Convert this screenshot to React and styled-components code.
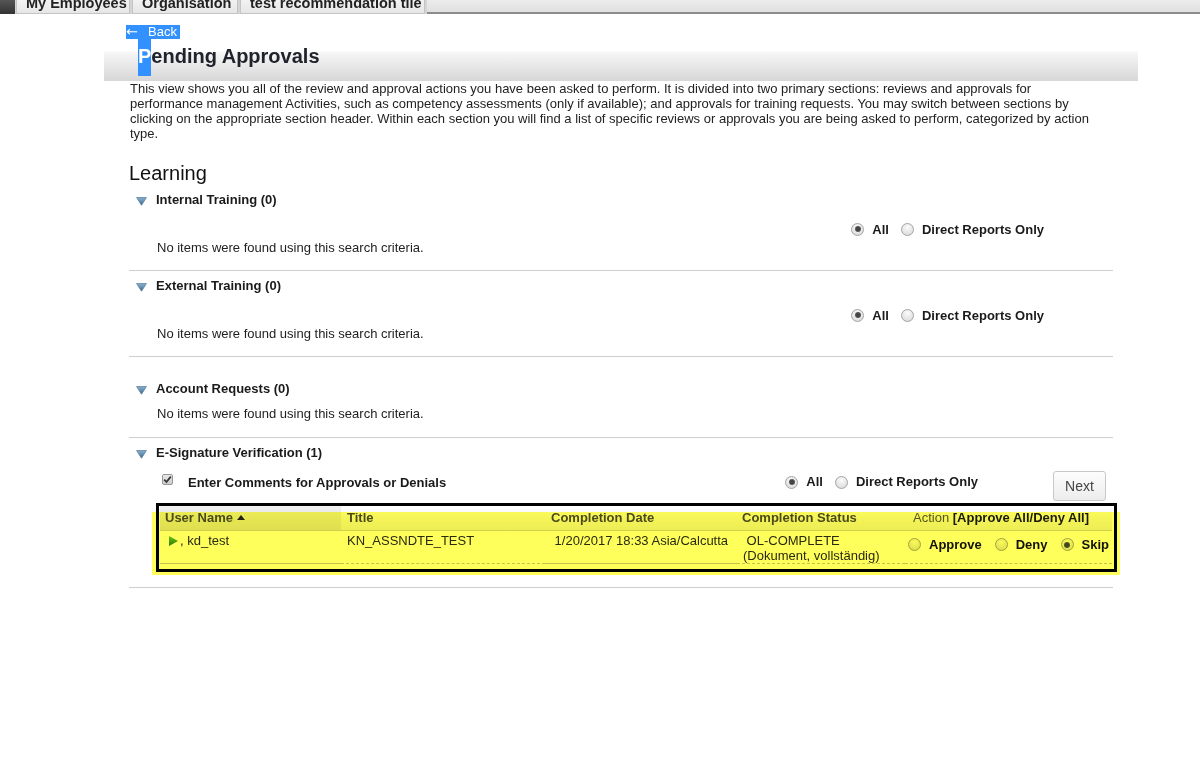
import styled, { createGlobalStyle } from "styled-components";

const GlobalStyle = createGlobalStyle`
  html, body {
    margin: 0;
    padding: 0;
    background: #fff;
  }
  body {
    font-family: "Liberation Sans", Arial, sans-serif;
    font-size: 13px;
    color: #222;
  }
`;

const sections = [
    { title: "Internal Training (0)", filter: true, padTop: 7 },
    { title: "External Training (0)", filter: true, padTop: 7 },
    { title: "Account Requests (0)", filter: false, padTop: 24, gap: 9 },
];

const columns = [
    { label: "User Name", pad: 5, sorted: true },
    { label: "Title", pad: 6 },
    { label: "Completion Date", pad: 6 },
    { label: "Completion Status", pad: 5 },
];

function Caret() {
    return (
        <CaretIcon width="11" height="9" viewBox="0 0 11 9">
            <defs>
                <linearGradient id="caretFill" x1="0" y1="0" x2="0" y2="1">
                    <stop offset="0" stopColor="#8cb2d0" />
                    <stop offset="1" stopColor="#3d6688" />
                </linearGradient>
            </defs>
            <polygon points="0.6,0.6 10.4,0.6 5.5,8.2" fill="url(#caretFill)" stroke="#56809f" strokeWidth="0.8" strokeLinejoin="round" />
        </CaretIcon>
    );
}

function Radio({ label, checked }) {
    return (
        <RadioOption>
            <RadioDot $checked={checked} />
            {label && <span>{label}</span>}
        </RadioOption>
    );
}

function Filter() {
    return (
        <RadioGroup>
            <Radio label="All" checked />
            <Radio label="Direct Reports Only" />
        </RadioGroup>
    );
}

export default function App() {
    return (
        <>
            <GlobalStyle />
            <TopBar>
                <AppBlock />
                <Tab $w={114}><TabLabel>My Employees</TabLabel></Tab>
                <Tab $w={106}><TabLabel>Organisation</TabLabel></Tab>
                <Tab $w={185}><TabLabel>test recommendation tile</TabLabel></Tab>
                <TopFill />
            </TopBar>

            <Main>
                <BackLink><Arrow>←</Arrow>Back</BackLink>
                <Banner>
                    <Heading><Selected>P</Selected>ending Approvals</Heading>
                </Banner>

                <Content>
                    <Intro>
                        This view shows you all of the review and approval actions you have been asked to perform. It is divided into two primary sections: reviews and approvals for performance management Activities, such as competency assessments (only if available); and approvals for training requests. You may switch between sections by clicking on the appropriate section header. Within each section you will find a list of specific reviews or approvals you are being asked to perform, categorized by action type.
                    </Intro>

                    <GroupTitle>Learning</GroupTitle>

                    {sections.map((s) => (
                        <Section key={s.title} $padTop={s.padTop} $padBottom={s.filter ? 15 : 16}>
                            <SectionHeader><Caret />{s.title}</SectionHeader>
                            {s.filter && (
                                <FilterRow><Filter /></FilterRow>
                            )}
                            <NoItems $gap={s.gap || 1}>No items were found using this search criteria.</NoItems>
                        </Section>
                    ))}

                    <Section $padTop={7} $padBottom={23}>
                        <SectionHeader><Caret />E-Signature Verification (1)</SectionHeader>
                        <ControlRow>
                            <CheckBox>
                                <svg width="9" height="9" viewBox="0 0 9 9">
                                    <path d="M1.2 4.6 L3.5 7 L7.8 1.6" fill="none" stroke="#333" strokeWidth="1.8" />
                                </svg>
                            </CheckBox>
                            <CommentLabel>Enter Comments for Approvals or Denials</CommentLabel>
                            <ControlRadios><Filter /></ControlRadios>
                            <NextButton type="button">Next</NextButton>
                        </ControlRow>

                        <TableArea>
                            <Table>
                                {columns.map((c) => (
                                    <HeadCell key={c.label} $pad={c.pad} $sorted={c.sorted}>
                                        {c.label}
                                        {c.sorted && (
                                            <SortIcon width="8" height="5" viewBox="0 0 8 5">
                                                <polygon points="0,5 4,0 8,5" fill="#222" />
                                            </SortIcon>
                                        )}
                                    </HeadCell>
                                ))}
                                <HeadCell $pad={8}>
                                    <span>
                                        <Plain>Action </Plain>
                                        <strong>[Approve All/Deny All]</strong>
                                    </span>
                                </HeadCell>

                                <DataCell $pad={9} $line="solid">
                                    <PlayIcon width="9" height="10" viewBox="0 0 9 10">
                                        <defs>
                                            <linearGradient id="playFill" x1="0" y1="0" x2="0" y2="1">
                                                <stop offset="0" stopColor="#6cc23c" />
                                                <stop offset="1" stopColor="#2c7a12" />
                                            </linearGradient>
                                        </defs>
                                        <polygon points="0,0 9,5 0,10" fill="url(#playFill)" />
                                    </PlayIcon>
                                    , kd_test
                                </DataCell>
                                <DataCell $pad={6} $line="dashed">KN_ASSNDTE_TEST</DataCell>
                                <DataCell $pad={6} $line="solid">&nbsp;1/20/2017 18:33 Asia/Calcutta</DataCell>
                                <DataCell $pad={6} $line="dashed">
                                    &nbsp;OL-COMPLETE<br />(Dokument, vollständig)
                                </DataCell>
                                <DataCell $pad={3} $line="dashed" $top={6}>
                                    <ActionGroup>
                                        <Radio label="Approve" />
                                        <Radio label="Deny" />
                                        <Radio label="Skip" checked />
                                    </ActionGroup>
                                </DataCell>
                            </Table>
                            <Highlight />
                            <Frame />
                        </TableArea>
                    </Section>
                </Content>
            </Main>
        </>
    );
}

const TopBar = styled.div`
    display: flex;
    height: 14px;
    overflow: hidden;
    background: #d4d4d4;
`;
const AppBlock = styled.div`
    width: 15px;
    margin-right: 1px;
    background: linear-gradient(#555, #333);
`;
const Tab = styled.div`
    box-sizing: border-box;
    width: ${(p) => p.$w}px;
    margin-right: 2px;
    padding-left: 9px;
    border: 1px solid #c4c4c4;
    border-top: none;
    background: linear-gradient(#f2f2f2, #e6e6e6);
    overflow: hidden;
`;
const TabLabel = styled.span`
    display: block;
    margin-top: -4px;
    font-size: 14.5px;
    font-weight: bold;
    line-height: 14px;
    color: #222;
    white-space: nowrap;
`;
const TopFill = styled.div`
    flex: 1;
    box-sizing: border-box;
    border-bottom: 2px solid #8c8c8c;
    background: linear-gradient(#ececec, #e0e0e0);
`;

const Main = styled.div`
    width: 1034px;
    margin-left: 104px;
`;
const BackLink = styled.a`
    display: inline-block;
    margin: 11px 0 0 22px;
    padding-right: 3px;
    background: #3390ff;
    color: #fff;
    font-size: 13px;
    line-height: 14px;
    vertical-align: top;
`;
const Arrow = styled.span`
    display: inline-block;
    width: 11px;
    margin-right: 11px;
    font-family: "DejaVu Sans", sans-serif;
    font-size: 13px;
    line-height: 14px;
    transform: scaleX(1.1);
    transform-origin: left center;
`;
const Banner = styled.div`
    height: 44px;
    margin-top: -2px;
    padding-left: 34px;
    background: linear-gradient(#fff 0, #fff 14px, #f7f7f7 15px, #d7d7d7 100%);
`;
const Heading = styled.h1`
    margin: 0;
    font-size: 20px;
    font-weight: bold;
    line-height: 39px;
    color: #20222c;
`;
const Selected = styled.span`
    display: inline-block;
    background: #3390ff;
    color: #fff;
    line-height: 39px;
`;

const Content = styled.div`
    width: 984px;
    margin-left: 25px;
`;
const Intro = styled.p`
    width: 965px;
    margin: 0 0 0 1px;
    font-size: 13px;
    line-height: 15px;
    color: #222;
`;
const GroupTitle = styled.h2`
    margin: 20px 0 0;
    font-size: 20px;
    font-weight: normal;
    line-height: 24px;
    color: #111;
`;

const Section = styled.section`
    padding: ${(p) => p.$padTop}px 0 ${(p) => p.$padBottom}px;
    border-bottom: 1px solid #cfcfcf;
`;
const SectionHeader = styled.div`
    display: flex;
    align-items: center;
    gap: 9px;
    padding-left: 7px;
    font-size: 13px;
    font-weight: bold;
    line-height: 16px;
    color: #1a1a1a;
`;
const CaretIcon = styled.svg`
    display: block;
    margin-top: 2px;
`;
const FilterRow = styled.div`
    display: flex;
    justify-content: flex-end;
    align-items: center;
    height: 20px;
    margin-top: 11px;
    padding-right: 69px;
`;
const RadioGroup = styled.div`
    display: flex;
    align-items: center;
    gap: 12px;
    font-size: 13px;
    font-weight: bold;
    color: #1a1a1a;
`;
const RadioOption = styled.label`
    display: inline-flex;
    align-items: center;
    gap: 8px;
`;
const RadioDot = styled.span`
    position: relative;
    box-sizing: border-box;
    width: 13px;
    height: 13px;
    border: 1px solid #a3a3a3;
    border-radius: 50%;
    background: radial-gradient(circle at 50% 30%, #fbfbfb, #d6d6d6);

    &::after {
        content: "";
        display: ${(p) => (p.$checked ? "block" : "none")};
        position: absolute;
        left: 2.5px;
        top: 2.5px;
        width: 6px;
        height: 6px;
        border-radius: 50%;
        background: radial-gradient(circle, #444 40%, #777 100%);
    }
`;
const NoItems = styled.div`
    margin-top: ${(p) => p.$gap}px;
    padding-left: 28px;
    font-size: 13px;
    line-height: 15px;
    color: #222;
`;

const ControlRow = styled.div`
    display: flex;
    align-items: flex-start;
    height: 30px;
    margin-top: 10px;
    padding-right: 7px;
`;
const CheckBox = styled.span`
    display: flex;
    align-items: center;
    justify-content: center;
    box-sizing: border-box;
    width: 11px;
    height: 11px;
    margin: 3px 0 0 33px;
    border: 1px solid #979797;
    border-radius: 2px;
    background: linear-gradient(#e8e8e8, #cdcdcd);
`;
const CommentLabel = styled.span`
    margin: 4px 0 0 15px;
    font-size: 13px;
    font-weight: bold;
    line-height: 16px;
    color: #1a1a1a;
`;
const ControlRadios = styled.div`
    margin: 3px 75px 0 auto;
    line-height: 16px;
`;
const NextButton = styled.button`
    box-sizing: border-box;
    width: 53px;
    height: 30px;
    padding: 0;
    border: 1px solid #c8c8c8;
    border-radius: 3px;
    background: linear-gradient(#fdfdfd, #ececec);
    font-family: "Liberation Sans", Arial, sans-serif;
    font-size: 14px;
    color: #444;
`;

const TableArea = styled.div`
    position: relative;
    width: 952px;
    margin: 4px 0 0 31px;
`;
const Table = styled.div`
    display: grid;
    grid-template-columns: 181px 204px 192px 168px 1fr;
    font-size: 13px;
`;
const HeadCell = styled.div`
    display: flex;
    align-items: center;
    gap: 4px;
    height: 25px;
    padding-left: ${(p) => p.$pad}px;
    border-bottom: 1px solid #d0d0d0;
    background: ${(p) => (p.$sorted ? "linear-gradient(#f0f0f0, #dedede)" : "linear-gradient(#fff, #ececec)")};
    font-weight: bold;
    color: #4a4a4a;
    white-space: nowrap;

    strong {
        color: #1a1a1a;
    }
`;
const Plain = styled.span`
    font-weight: normal;
    color: #555;
`;
const SortIcon = styled.svg`
    display: block;
    margin-top: -1px;
`;
const DataCell = styled.div`
    padding: ${(p) => p.$top || 2}px 0 0 ${(p) => p.$pad}px;
    border-bottom: 1px ${(p) => p.$line} #c4c4c4;
    line-height: 15px;
    color: #2a2a2a;
    white-space: nowrap;
`;
const PlayIcon = styled.svg`
    display: inline-block;
    vertical-align: -1px;
    margin-right: 2px;
`;
const ActionGroup = styled.div`
    display: flex;
    align-items: center;
    gap: 13px;
    font-weight: bold;
    color: #111;
`;
const Highlight = styled.div`
    position: absolute;
    left: -8px;
    top: 7px;
    width: 968px;
    height: 63px;
    background: #ffff5c;
    mix-blend-mode: multiply;
    pointer-events: none;
`;
const Frame = styled.div`
    position: absolute;
    left: -4px;
    top: -2px;
    box-sizing: border-box;
    width: 961px;
    height: 69px;
    border: 3px solid #000;
    pointer-events: none;
`;
